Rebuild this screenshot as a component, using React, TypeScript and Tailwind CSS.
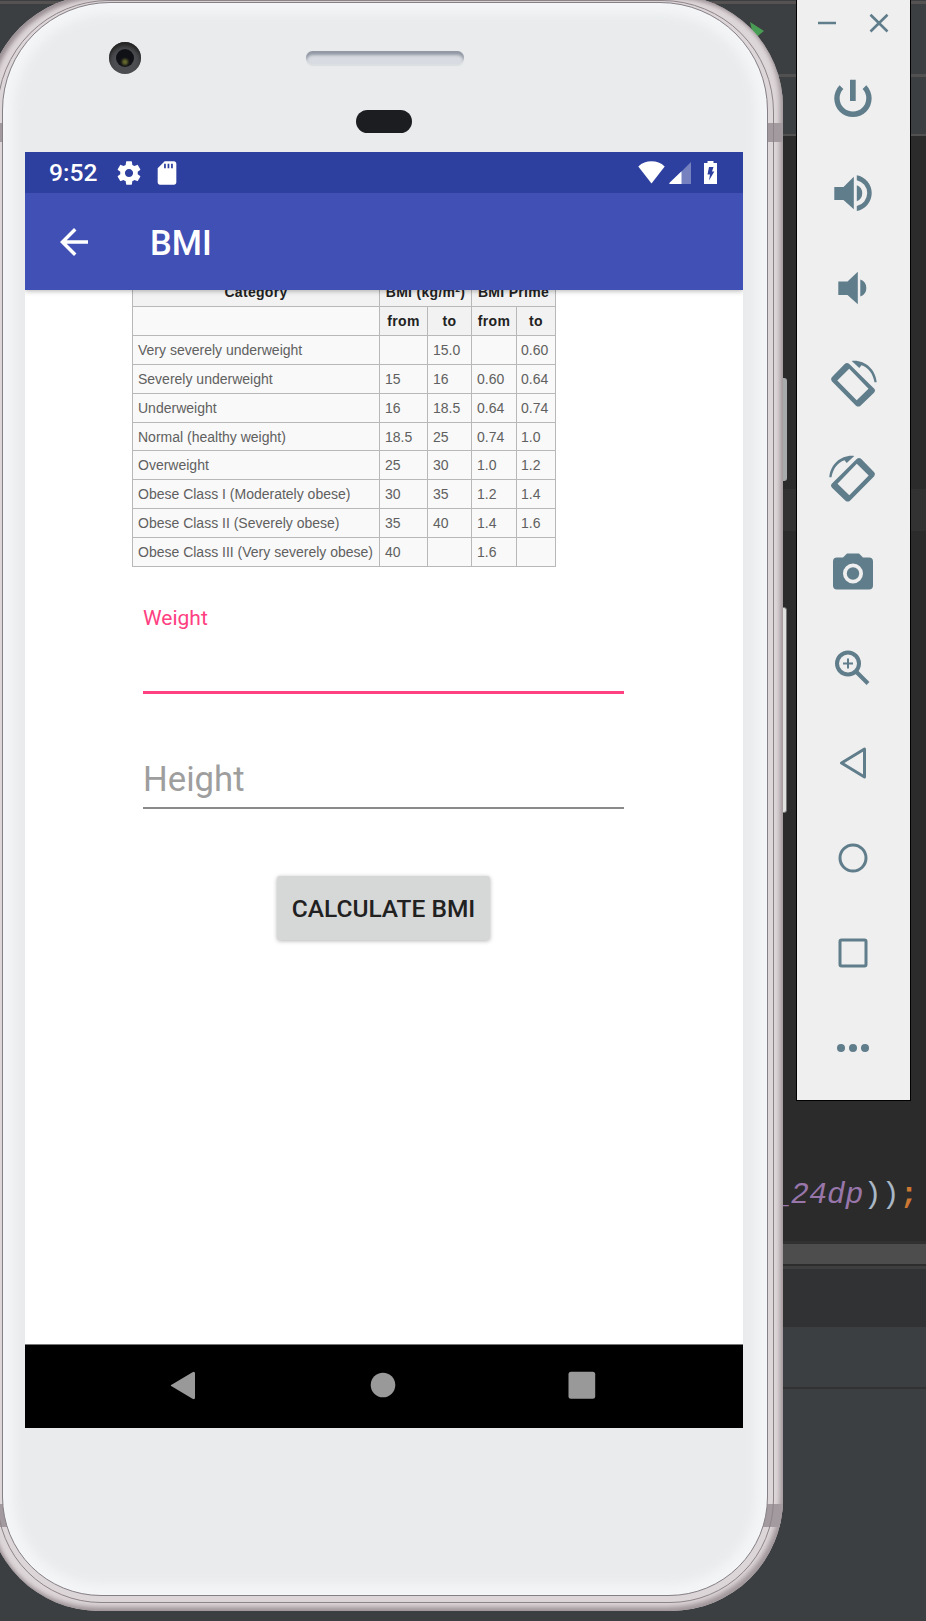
import type { ReactNode } from 'react';

type Row = [string, string, string, string, string];

const rows: Row[] = [
  ['Very severely underweight', '', '15.0', '', '0.60'],
  ['Severely underweight', '15', '16', '0.60', '0.64'],
  ['Underweight', '16', '18.5', '0.64', '0.74'],
  ['Normal (healthy weight)', '18.5', '25', '0.74', '1.0'],
  ['Overweight', '25', '30', '1.0', '1.2'],
  ['Obese Class I (Moderately obese)', '30', '35', '1.2', '1.4'],
  ['Obese Class II (Severely obese)', '35', '40', '1.4', '1.6'],
  ['Obese Class III (Very severely obese)', '40', '', '1.6', ''],
];

function Editor() {
  return (
    <div className="flex h-[1621px] w-[926px] flex-col bg-[#3c3f41]">
      <div className="mt-px h-[3px] bg-[#555251]" />
      <div className="h-[70px]" />
      <div className="h-[3px] bg-[#515151]" />
      <div className="h-[57px]" />
      <div className="h-[2px] bg-[#515151]" />
      <div className="h-[353px] bg-[#2b2b2b]" />
      <div className="h-[42px] bg-[#323232]" />
      <div className="flex h-[710px] items-end justify-end bg-[#2b2b2b] pr-[8px] pb-[29px]">
        <code className="text-[30.3px] leading-[34px] whitespace-pre text-[#a9b7c6] [font-family:'Liberation_Mono',monospace]">
          <i className="text-[#9876aa]">_24dp</i>))<span className="font-bold text-[#cc7832]">;</span>
        </code>
      </div>
      <div className="h-[3px] bg-[#313131]" />
      <div className="h-[20px] bg-[#4d4d4d]" />
      <div className="h-[2px] bg-[#2d2d2d]" />
      <div className="h-[3px] bg-[#3f3f3f]" />
      <div className="h-[58px] bg-[#313233]" />
      <div className="h-[60px]" />
      <div className="h-[2px] bg-[#323232]" />
    </div>
  );
}

function StatusBar() {
  return (
    <div className="relative z-20 flex h-[41px] shrink-0 items-center bg-[#2d3f9f] pr-[26px] pl-[24px] text-white">
      <span className="mt-px w-[66px] text-[24.6px] leading-none font-medium">9:52</span>
      <svg className="size-[28px]" viewBox="0 0 24 24" fill="currentColor">
        <path d="M19.43 12.98c.04-.32.07-.64.07-.98s-.03-.66-.07-.98l2.11-1.65c.19-.15.24-.42.12-.64l-2-3.46c-.12-.22-.39-.3-.61-.22l-2.49 1c-.52-.4-1.08-.73-1.69-.98l-.38-2.65C14.46 2.18 14.25 2 14 2h-4c-.25 0-.46.18-.49.42l-.38 2.65c-.61.25-1.17.59-1.69.98l-2.49-1c-.23-.09-.49 0-.61.22l-2 3.46c-.13.22-.07.49.12.64l2.11 1.65c-.04.32-.07.65-.07.98s.03.66.07.98l-2.11 1.65c-.19.15-.24.42-.12.64l2 3.46c.12.22.39.3.61.22l2.49-1c.52.4 1.08.73 1.69.98l.38 2.65c.03.24.24.42.49.42h4c.25 0 .46-.18.49-.42l.38-2.65c.61-.25 1.17-.59 1.69-.98l2.49 1c.23.09.49 0 .61-.22l2-3.46c.12-.22.07-.49-.12-.64l-2.11-1.65zM12 15.5c-1.93 0-3.5-1.57-3.5-3.5s1.57-3.5 3.5-3.5 3.5 1.57 3.5 3.5-1.57 3.5-3.5 3.5z" />
      </svg>
      <svg className="ml-[10px] size-[28px]" viewBox="0 0 24 24" fill="currentColor">
        <path d="M18 2h-8L4.020 8 4 20c0 1.100.9 2 2 2h12c1.100 0 2-.9 2-2V4c0-1.100-.9-2-2-2zm-7 6H9.500V4H11v4zm3 0h-1.500V4H14v4zm3 0h-1.500V4H17v4z" />
      </svg>
      <svg className="ml-auto h-[23px] w-[27px]" viewBox="0 0 27 23" fill="currentColor">
        <path d="M13.500 22.500.3 5.500C4 1.800 8.500.3 13.500.3s9.500 1.500 13.200 5.200z" />
      </svg>
      <svg className="ml-[4px] h-[23px] w-[22px]" viewBox="0 0 22 23" fill="currentColor">
        <path opacity=".35" d="M22 1v22H12V11z" />
        <path d="M12.500 10.300V23H1.500Q-.5 23 .8 21.500z" />
      </svg>
      <svg className="ml-[13px] h-[23px] w-[13px]" viewBox="0 0 13 23">
        <path fill="currentColor" d="M3.500 0h6v2H13v21H0V2h3.500z" />
        <path fill="#2d3f9f" d="M5 6h4.500L8 10.500h2.300L5 19.500l1-6H3.500z" />
      </svg>
    </div>
  );
}

function AppBar() {
  return (
    <div className="relative z-10 flex h-[97px] shrink-0 items-center bg-[#4150b5] pl-[28px] text-white shadow-[0_1px_5px_rgba(0,0,0,0.3)]">
      <svg className="size-[42px]" viewBox="0 0 24 24" fill="currentColor">
        <path d="M20 11H7.830l5.590-5.590L12 4l-8 8 8 8 1.410-1.410L7.830 13H20v-2z" />
      </svg>
      <h1 className="mt-[4px] ml-[55px] text-[34.500px] leading-none font-medium">BMI</h1>
    </div>
  );
}

function BmiTable() {
  const line = 'border-r border-b border-[#b8b8b8]';
  const grid = 'grid grid-cols-[247px_48px_44px_45px_39px] h-[28.9px]';
  return (
    <div className="-mt-[13px] ml-[107px] w-[424px] border-l border-[#b8b8b8] bg-[#f9f9f9] text-[14px] text-[#606060] [font-family:'Liberation_Sans',Arial,sans-serif]">
      <div className="grid h-[30px] grid-cols-[247px_92px_84px] grid-rows-[30px] bg-[#f2f2f2] text-center leading-[31px] font-bold tracking-[0.3px] text-[#222]">
        <div className={line}>Category</div>
        <div className={line}>BMI (kg/m²)</div>
        <div className={line}>BMI Prime</div>
      </div>
      <div className={`${grid} grid-rows-[28.9px] text-center leading-[29px] font-bold tracking-[0.3px] text-[#222]`}>
        <div className={line} />
        <div className={`${line} bg-[#f2f2f2]`}>from</div>
        <div className={`${line} bg-[#f2f2f2]`}>to</div>
        <div className={`${line} bg-[#f2f2f2]`}>from</div>
        <div className={`${line} bg-[#f2f2f2]`}>to</div>
      </div>
      {rows.map((row) => (
        <div key={row[0]} className={`${grid} grid-rows-[28.9px] leading-[29px] whitespace-nowrap`}>
          {row.map((cell, i) => (
            <div key={i} className={`${line} ${i === 4 ? 'pl-[4px]' : 'pl-[5px]'}`}>
              {cell}
            </div>
          ))}
        </div>
      ))}
    </div>
  );
}

function Screen() {
  return (
    <div className="flex h-[1276px] w-[718px] flex-col overflow-hidden bg-white">
      <StatusBar />
      <AppBar />
      <div className="flex flex-1 flex-col overflow-hidden">
        <BmiTable />
        <div className="mt-[38px] ml-[118px] h-[89px] w-[481px] border-b-[3px] border-[#ff4081] text-[21px] leading-[26px] text-[#ff4081]">
          Weight
        </div>
        <div className="mt-[63px] ml-[118px] h-[52px] w-[481px] border-b-2 border-[#8a8a8a] text-[34.700px] leading-[45px] text-[#9e9e9e]">
          Height
        </div>
        <button className="mt-[67px] ml-[252px] h-[64px] w-[213px] rounded-[3px] bg-[#d6d7d7] pt-[2px] text-[24.500px] leading-none font-medium whitespace-nowrap text-[#212121] shadow-[0_1px_4px_rgba(0,0,0,0.3)]">
          CALCULATE BMI
        </button>
      </div>
      <div className="h-[84px] shrink-0 border-t border-[#777] bg-black">
        <svg className="h-[83px] w-[718px]" viewBox="0 0 718 83" fill="#999">
          <path d="M147 39.500 167.500 27.200Q170 26 170 28.500V52.500Q170 55 167.500 53.700L147 41.500Q144.500 40.500 147 39.500z" />
          <circle cx="358" cy="40" r="12.300" />
          <rect x="543.500" y="26.700" width="26.700" height="27" rx="2.500" />
        </svg>
      </div>
    </div>
  );
}

function Phone() {
  return (
    <div className="absolute -top-[5px] -left-[13px] h-[1616px] w-[796px]">
      <div className="absolute top-[383px] right-[-4px] h-[103px] w-[8px] rounded-[3px] border border-dotted border-[#aaa] bg-[#a8abac]" />
      <div className="absolute top-[612px] right-[-4px] h-[206px] w-[8px] rounded-[3px] border border-[#777] bg-[#e0e2e0]" />
      <div className="absolute inset-0 overflow-hidden rounded-[112px] bg-[#ddd6d8] shadow-[inset_-3px_-4px_5px_#9f9599,inset_3px_3px_4px_#9a8f94]">
        <div className="absolute top-[128px] right-0 left-0 h-[19px] bg-[#a39a9f]" />
        <div className="absolute right-0 bottom-[84px] left-0 h-[23px] bg-[#a39a9f]" />
        <div className="absolute top-0 left-[579px] h-[6px] w-[19px] bg-[#756d71]" />
        <div className="absolute top-[5px] right-[9px] bottom-[8px] left-[10px] rounded-t-[112px] rounded-b-[104px] border border-[#8d8488]" />
        <div className="absolute top-[7px] right-[15px] bottom-[15px] left-[15px] flex flex-col rounded-t-[108px] rounded-b-[99px] border border-[#857f86] bg-[#e9ebec] shadow-[inset_0_0_12px_11px_#f4f5f7]">
          <div className="relative h-[149px] w-full">
            <div className="absolute top-[39px] left-[106px] flex size-[32px] items-center justify-center rounded-full bg-[#4c4d50] shadow-[inset_0_4px_4px_#222]">
              <div className="flex size-[18px] items-center justify-center rounded-full bg-[#101116]">
                <div className="mt-[7px] size-[6px] rounded-full bg-[#686b2c] blur-[1px]" />
              </div>
            </div>
            <div className="absolute top-[48px] left-[303px] h-[13px] w-[158px] rounded-full bg-[#d8dbe1] shadow-[inset_0_4px_3px_#9299a4,0_2px_1px_#dcdfe2]" />
            <div className="absolute top-[107px] left-[353px] h-[23px] w-[56px] rounded-full bg-[#1c1d21]" />
          </div>
          <div className="pl-[22px]">
            <Screen />
          </div>
        </div>
      </div>
    </div>
  );
}

function Tool({ children }: { children: ReactNode }) {
  return (
    <button className="flex h-[95px] items-center justify-center pr-px">
      <svg className="size-[50px]" viewBox="0 0 50 50" fill="currentColor">
        {children}
      </svg>
    </button>
  );
}

function RotateGlyph() {
  return (
    <>
      <path
        fillRule="evenodd"
        d="M3.800 19.200 16.700 6.100Q19 4 21.300 6.100L46 30.500Q48 32.500 46 34.700L32.500 47.700Q30.300 49.500 28 47.700L3.800 23.300Q2 21.200 3.800 19.200zM9.300 22.600 28.700 42.300 40.500 30.700 21.200 10.800z"
      />
      <path d="M23.700 3C36 1.500 47.500 10.500 48.700 24.200H46.500C45 16 40.500 9.800 33.500 7.300L31.300 10z" />
    </>
  );
}

function Toolbar() {
  return (
    <div className="absolute top-0 left-[796px] flex h-[1101px] w-[115px] flex-col border-x border-b border-black bg-[#efefef] text-[#607d8b]">
      <svg className="h-[50px] w-[113px] shrink-0" viewBox="0 0 113 50" stroke="currentColor" strokeWidth="2.600">
        <path d="M21 23h18M73.500 14.800l17 16.700M90.500 14.800l-17 16.700" />
      </svg>
      <Tool>
        <path d="M22 6.800h5.700V28H22zM38.300 12.300l-3.700 3.700a13.300 13.300 0 1 1-19.300 0l-3.700-3.700a18.700 18.700 0 1 0 26.700 0z" />
      </Tool>
      <Tool>
        <path d="M6.300 19h9.200L25.800 8.700v32.600L15.500 32H6.300zM28.800 17.300a8.600 8.600 0 0 1 0 16zM28.800 7.200a18.200 18.200 0 0 1 0 35.800v-5a13.200 13.200 0 0 0 0-25.800z" />
      </Tool>
      <Tool>
        <path d="M10.300 18.500h9.200L29.800 8.700v32.600L19.500 32H10.300zM32.300 16.500a9 9 0 0 1 0 17z" />
      </Tool>
      <Tool>
        <RotateGlyph />
      </Tool>
      <Tool>
        <g transform="translate(50 0) scale(-1 1)">
          <RotateGlyph />
        </g>
      </Tool>
      <Tool>
        <path
          fillRule="evenodd"
          d="M19 5.500h12l4 4h6q4 0 4 4v24q0 4-4 4H9q-4 0-4-4v-24q0-4 4-4h6zM25 15.500a10 10 0 1 0 0 20 10 10 0 0 0 0-20z"
        />
        <circle cx="25" cy="25.500" r="6.200" />
      </Tool>
      <Tool>
        <circle cx="20" cy="20.500" r="11" fill="none" stroke="currentColor" strokeWidth="4" />
        <path d="M20 15.500v10M15 20.500h10" fill="none" stroke="currentColor" strokeWidth="2" />
        <path d="m28.500 29 1.500 1.500 10 10" fill="none" stroke="currentColor" strokeWidth="4" />
      </Tool>
      <Tool>
        <path d="M36.500 11v28L13.500 25z" fill="none" stroke="currentColor" strokeWidth="3" strokeLinejoin="round" />
      </Tool>
      <Tool>
        <circle cx="25" cy="25" r="13" fill="none" stroke="currentColor" strokeWidth="3" />
      </Tool>
      <Tool>
        <rect x="12" y="12" width="26" height="26" rx="1.500" fill="none" stroke="currentColor" strokeWidth="3" />
      </Tool>
      <Tool>
        <circle cx="13" cy="25" r="4" />
        <circle cx="25" cy="25" r="4" />
        <circle cx="37" cy="25" r="4" />
      </Tool>
    </div>
  );
}

export default function App() {
  return (
    <main className="relative h-[1621px] w-[926px] overflow-hidden [font-family:Roboto,sans-serif]">
      <Editor />
      <svg className="absolute top-[22px] left-[750px] h-[17px] w-[15px]" viewBox="0 0 15 17" fill="#499c54">
        <path d="M0 0 14 9 4 17z" />
      </svg>
      <Phone />
      <Toolbar />
    </main>
  );
}
